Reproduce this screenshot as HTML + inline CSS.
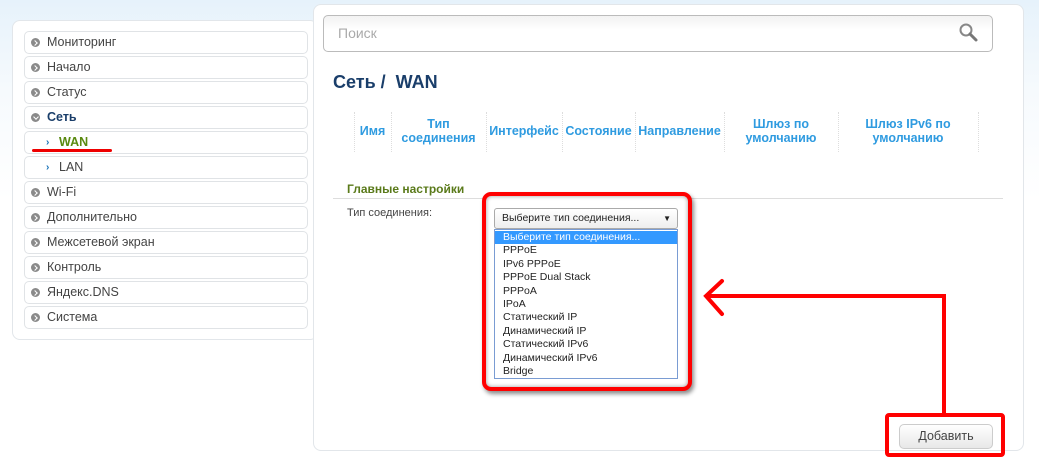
<!DOCTYPE html>
<html><head><meta charset="utf-8"><style>
*{margin:0;padding:0;box-sizing:border-box}
body{width:1039px;height:465px;overflow:hidden;position:relative;font-family:"Liberation Sans","DejaVu Sans",sans-serif;background:linear-gradient(#e6f2fb 0,#f6fafd 90px,#fff 200px)}
.abs{position:absolute}
.lp{left:12px;top:20px;width:306px;height:320px;background:#fff;border:1px solid #e2e6ea;border-radius:8px}
.mi{position:absolute;left:24px;width:284px;height:23px;border:1px solid #e0e3e6;border-radius:5px;background:#fff;font-size:12.5px;color:#444;line-height:21px;padding-left:22px}
.mi .d{position:absolute;left:6px;top:6px;width:9px;height:9px;border-radius:50%;background:#8a8a8a}
.mi .d:after{content:"";position:absolute;left:2px;top:3px;width:3px;height:3px;border-right:1.3px solid #fff;border-top:1.3px solid #fff;transform:rotate(45deg)}
.mi.open .d:after{left:3px;top:2px;transform:rotate(135deg)}
.sub{padding-left:34px}
.sub .c{position:absolute;left:21px;top:0;color:#1a73b8;font-size:10px;font-weight:bold}
.rp{left:313px;top:4px;width:711px;height:447px;background:#fff;border:1px solid #e2e6ea;border-radius:8px}
.th{position:absolute;top:117px;color:#2f9be0;font-weight:bold;font-size:12.5px;text-align:center;line-height:14px}
.sep{position:absolute;top:112px;height:40px;border-left:1px dotted #ddd}
.opt{height:13.4px;line-height:13.4px;font-size:10.5px;color:#222;padding-left:8px}
</style></head><body>
<div class="abs lp"></div>
<div class="mi" style="top:31px"><span class="d"></span>Мониторинг</div>
<div class="mi" style="top:56px"><span class="d"></span>Начало</div>
<div class="mi" style="top:81px"><span class="d"></span>Статус</div>
<div class="mi open" style="top:106px;color:#1a3e6a;font-weight:bold"><span class="d"></span>Сеть</div>
<div class="mi sub" style="top:131px;color:#5a8a10;font-weight:bold"><span class="c">›</span>WAN</div>
<div class="abs" style="left:32px;top:149px;width:80px;height:3px;background:#e00;border-radius:2px"></div>
<div class="mi sub" style="top:156px"><span class="c">›</span>LAN</div>
<div class="mi" style="top:181px"><span class="d"></span>Wi-Fi</div>
<div class="mi" style="top:206px"><span class="d"></span>Дополнительно</div>
<div class="mi" style="top:231px"><span class="d"></span>Межсетевой экран</div>
<div class="mi" style="top:256px"><span class="d"></span>Контроль</div>
<div class="mi" style="top:281px"><span class="d"></span>Яндекс.DNS</div>
<div class="mi" style="top:306px"><span class="d"></span>Система</div>

<div class="abs rp"></div>
<div class="abs" style="left:323px;top:15px;width:670px;height:37px;border:1px solid #bbb;border-radius:5px;background:linear-gradient(#f2f2f2,#fff 40%);font-size:14px;color:#aaa;line-height:35px;padding-left:14px">Поиск</div>
<svg class="abs" style="left:958px;top:22px" width="22" height="22"><circle cx="8" cy="8" r="5.5" fill="none" stroke="#888" stroke-width="2"/><line x1="12" y1="12" x2="18" y2="18" stroke="#777" stroke-width="3" stroke-linecap="round"/></svg>
<div class="abs" style="left:333px;top:72px;font-size:18px;font-weight:bold;color:#1a3e6a">Сеть /&nbsp; WAN</div>

<div class="sep" style="left:354px"></div><div class="sep" style="left:391px"></div><div class="sep" style="left:486px"></div><div class="sep" style="left:562px"></div><div class="sep" style="left:635px"></div><div class="sep" style="left:724px"></div><div class="sep" style="left:838px"></div><div class="sep" style="left:978px"></div>
<div class="th" style="left:354px;width:37px;top:124px">Имя</div>
<div class="th" style="left:391px;width:95px">Тип<br>соединения</div>
<div class="th" style="left:486px;width:76px;top:124px">Интерфейс</div>
<div class="th" style="left:562px;width:73px;top:124px">Состояние</div>
<div class="th" style="left:635px;width:89px;top:124px">Направление</div>
<div class="th" style="left:724px;width:114px">Шлюз по<br>умолчанию</div>
<div class="th" style="left:838px;width:140px">Шлюз IPv6 по<br>умолчанию</div>

<div class="abs" style="left:347px;top:182px;font-size:12px;font-weight:bold;color:#5a7a1a">Главные настройки</div>
<div class="abs" style="left:333px;top:198px;width:670px;height:1px;background:#ddd"></div>
<div class="abs" style="left:347px;top:207px;font-size:11px;color:#444">Тип соединения:</div>

<div class="abs" style="left:482px;top:192px;width:210px;height:199px;border:4px solid #f00;border-radius:9px;box-shadow:2px 3px 4px rgba(0,0,0,.45), inset 0 0 4px rgba(0,0,0,.4);background:#fff"></div>
<div class="abs" style="left:494px;top:208px;width:184px;height:21px;border:1px solid #aaa;border-radius:3px;background:linear-gradient(#fff,#eee);font-size:10.5px;line-height:19px;padding-left:7px;color:#222">Выберите тип соединения...<span style="position:absolute;right:6px;font-size:8px">▼</span></div>
<div class="abs" style="left:494px;top:229px;width:184px;height:150px;border:1px solid #7a9cd3;background:#fff;padding-top:1px">
<div class="opt" style="background:#3399ff;color:#fff">Выберите тип соединения...</div>
<div class="opt">PPPoE</div><div class="opt">IPv6 PPPoE</div><div class="opt">PPPoE Dual Stack</div><div class="opt">PPPoA</div><div class="opt">IPoA</div><div class="opt">Статический IP</div><div class="opt">Динамический IP</div><div class="opt">Статический IPv6</div><div class="opt">Динамический IPv6</div><div class="opt">Bridge</div>
</div>

<svg class="abs" style="left:0;top:0" width="1039" height="465">
<polyline points="706,296 944,296 944,416" fill="none" stroke="#f00" stroke-width="4"/>
<polyline points="722,281 706,296 722,314" fill="none" stroke="#f00" stroke-width="4" stroke-linecap="round"/>
<rect x="887" y="415" width="116" height="40" fill="none" stroke="#f00" stroke-width="4" rx="2"/>
</svg>
<div class="abs" style="left:899px;top:424px;width:94px;height:25px;border:1px solid #ccc;border-radius:5px;background:linear-gradient(#fff,#e8e8e8);font-size:12.5px;color:#444;text-align:center;line-height:23px">Добавить</div>
</body></html>
